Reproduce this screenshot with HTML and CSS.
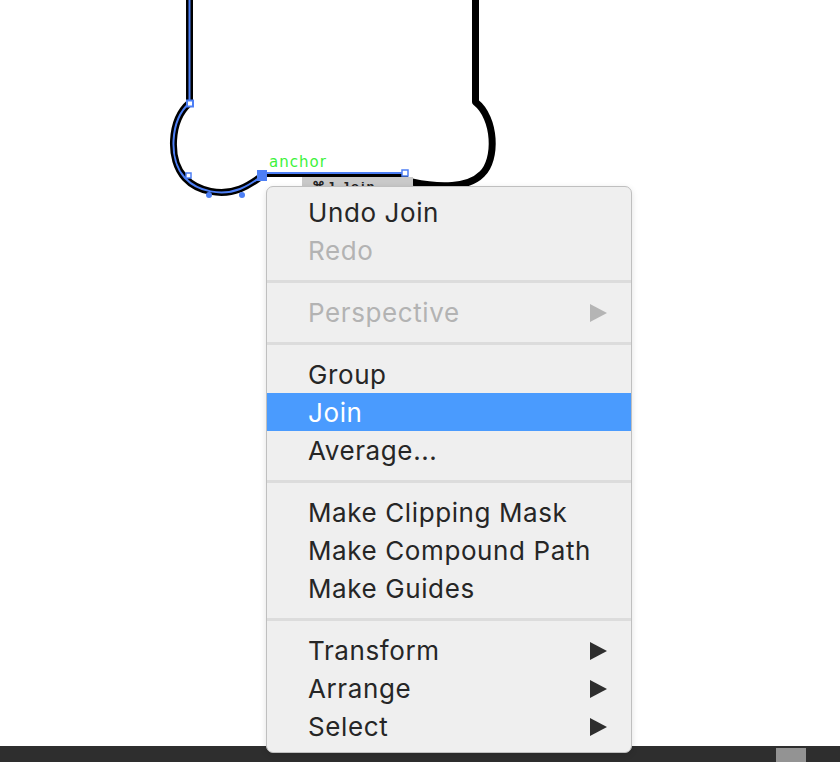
FILE: index.html
```html
<!DOCTYPE html>
<html>
<head>
<meta charset="utf-8">
<link rel="stylesheet" href="styles.css">
</head>
<body>
<div class="stage">
  <svg class="art" width="840" height="746" viewBox="0 0 840 746">
    <g fill="none" stroke="#000" stroke-linejoin="round">
      <path d="M189.5,0 L189.5,103 C170,120 168,160 185,178 C198,192 222,196 240,189 C250,185 256,180 262,176" stroke-width="7"/>
      <path d="M262,174.5 L408,174.5" stroke-width="5"/>
      <path d="M475.5,0 L475.5,102 C496,118 497,160 482,174 C468,188 440,188 412,182" stroke-width="7"/>
    </g>
    <g fill="none" stroke="#4d7ff5" stroke-width="2">
      <path d="M189.5,0 L189.5,103 C170,120 168,160 185,178 C198,192 222,196 240,189 C250,185 256,180 262,176"/>
      <path d="M262,173 L405,173"/>
    </g>
    <g fill="#4d7ff5">
      <rect x="187" y="100.5" width="6" height="6" fill="#fff" stroke="#4d7ff5" stroke-width="2"/>
      <rect x="186" y="173" width="5" height="5" fill="#fff" stroke="#4d7ff5" stroke-width="1.5"/>
      <circle cx="209" cy="195" r="3"/>
      <circle cx="242" cy="195" r="3"/>
      <rect x="257" y="170" width="10" height="11"/>
      <rect x="402" y="170" width="6" height="6" fill="#fff" stroke="#4d7ff5" stroke-width="1.5"/>
    </g>
  </svg>
  <div class="label">anchor</div>
  <div class="chip">⌘J Join</div>

  <div class="menu">
    <div class="item">Undo Join</div>
    <div class="item disabled">Redo</div>
    <div class="sep"></div>
    <div class="item disabled sub">Perspective<svg class="arrow" width="17" height="18" viewBox="0 0 17 18"><polygon points="0,0 17,9 0,18"/></svg></div>
    <div class="sep"></div>
    <div class="item">Group</div>
    <div class="item active">Join</div>
    <div class="item">Average...</div>
    <div class="sep"></div>
    <div class="item">Make Clipping Mask</div>
    <div class="item">Make Compound Path</div>
    <div class="item">Make Guides</div>
    <div class="sep"></div>
    <div class="item sub">Transform<svg class="arrow" width="17" height="18" viewBox="0 0 17 18"><polygon points="0,0 17,9 0,18"/></svg></div>
    <div class="item sub">Arrange<svg class="arrow" width="17" height="18" viewBox="0 0 17 18"><polygon points="0,0 17,9 0,18"/></svg></div>
    <div class="item sub">Select<svg class="arrow" width="17" height="18" viewBox="0 0 17 18"><polygon points="0,0 17,9 0,18"/></svg></div>
  </div>
</div>
<div class="statusbar"><div class="thumb"></div></div>
</body>
</html>
```
FILE: styles.css
```css
html, body {
  margin: 0;
  padding: 0;
  background: #fff;
  width: 840px;
  height: 762px;
  overflow: hidden;
}
.stage {
  position: relative;
  height: 746px;
}
.art {
  position: absolute;
  left: 0;
  top: 0;
}
.label {
  position: absolute;
  left: 269px;
  top: 153px;
  font-family: "DejaVu Sans", sans-serif;
  font-size: 15px;
  letter-spacing: 1px;
  color: #3cf23c;
  line-height: 18px;
}
.chip {
  position: absolute;
  left: 302px;
  top: 177px;
  width: 111px;
  height: 20px;
  background: #c9c9c9;
  font-family: "Liberation Sans", sans-serif;
  font-weight: bold;
  font-size: 13px;
  line-height: 20px;
  color: #222;
  padding-left: 10px;
  box-sizing: border-box;
  letter-spacing: 2px;
}
.menu {
  position: absolute;
  left: 266px;
  top: 186px;
  width: 364px;
  padding: 6px 0 7px;
  background: #efefef;
  border: 1px solid #bfbfbf;
  border-radius: 7px;
  box-shadow: 0 2px 6px rgba(0,0,0,0.12);
  z-index: 2;
}
.item {
  display: flex;
  align-items: center;
  justify-content: space-between;
  height: 38px;
  box-sizing: border-box;
  padding: 1px 24px 0 41px;
  font-family: Inter, "Liberation Sans", sans-serif;
  font-size: 26px;
  letter-spacing: 0.6px;
  color: #262626;
}
.item.disabled {
  color: #b3b3b3;
}
.item.active {
  background: #4a9bfe;
  color: #fff;
}
.arrow {
  fill: #2e2e2e;
}
.disabled .arrow {
  fill: #b5b5b5;
}
.sep {
  height: 3px;
  margin: 11px 0 10px;
  background: #dcdcdc;
}
.statusbar {
  height: 16px;
  background: #2e2e2e;
  display: flex;
  justify-content: flex-end;
  align-items: flex-end;
  padding-right: 34px;
}
.thumb {
  width: 30px;
  height: 14px;
  background: #939393;
}
```
